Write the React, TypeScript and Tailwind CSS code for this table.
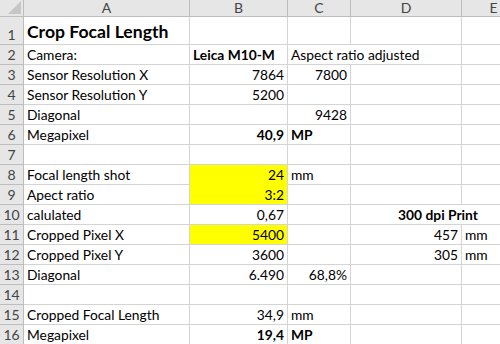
import React from 'react';

type Cell = {
  t?: string;
  align?: 'l' | 'r' | 'c';
  bold?: boolean;
  fill?: boolean;
  span?: number;
  noBottom?: boolean;
};

const COLS = ['A', 'B', 'C', 'D', 'E'];

// sheet contents, keyed by row number; each entry lists columns A..E
const rows: Record<number, (Cell | null)[]> = {
  1: [{ t: 'Crop Focal Length', bold: true }, {}, {}, {}, {}],
  2: [{ t: 'Camera:' }, { t: 'Leica M10-M', bold: true }, { t: 'Aspect ratio adjusted', span: 2 }, null, {}],
  3: [{ t: 'Sensor Resolution X' }, { t: '7864', align: 'r' }, { t: '7800', align: 'r' }, {}, {}],
  4: [{ t: 'Sensor Resolution Y' }, { t: '5200', align: 'r' }, {}, {}, {}],
  5: [{ t: 'Diagonal' }, {}, { t: '9428', align: 'r' }, {}, {}],
  6: [{ t: 'Megapixel' }, { t: '40,9', align: 'r', bold: true }, { t: 'MP', bold: true }, {}, {}],
  7: [{}, {}, {}, {}, {}],
  8: [{ t: 'Focal length shot' }, { t: '24', align: 'r', fill: true, noBottom: true }, { t: 'mm' }, {}, {}],
  9: [{ t: 'Apect ratio' }, { t: '3:2', align: 'r', fill: true }, {}, {}, {}],
  10: [{ t: 'calulated' }, { t: '0,67', align: 'r' }, {}, { t: '300 dpi Print', align: 'c', bold: true, span: 2 }, null],
  11: [{ t: 'Cropped Pixel X' }, { t: '5400', align: 'r', fill: true }, {}, { t: '457', align: 'r' }, { t: 'mm' }],
  12: [{ t: 'Cropped Pixel Y' }, { t: '3600', align: 'r' }, {}, { t: '305', align: 'r' }, { t: 'mm' }],
  13: [{ t: 'Diagonal' }, { t: '6.490', align: 'r' }, { t: '68,8%', align: 'r' }, {}, {}],
  14: [{}, {}, {}, {}, {}],
  15: [{ t: 'Cropped Focal Length' }, { t: '34,9', align: 'r' }, { t: 'mm' }, {}, {}],
  16: [{ t: 'Megapixel' }, { t: '19,4', align: 'r', bold: true }, { t: 'MP', bold: true }, {}, {}],
};

const font = "font-['Lato','Open_Sans',sans-serif]";

const SheetCell = ({ c, row }: { c: Cell; row: number }) => {
  const justify = c.align === 'r' ? 'justify-end' : c.align === 'c' ? 'justify-center' : 'justify-start';
  const title = row === 1;
  return (
    <div
      className={[
        'flex items-end whitespace-nowrap px-[3px] border-r border-b',
        c.span === 2 ? 'col-span-2' : '',
        c.fill ? 'bg-[#ffff00]' : 'bg-white',
        c.noBottom ? 'border-r-[#d4d4d4] border-b-[#ffff00]' : 'border-[#d4d4d4]',
        justify,
        title ? 'text-[17.6px] font-bold pb-[3px] leading-none' : 'text-[13.8px] leading-[19px]',
        c.bold && !title ? 'font-bold' : '',
      ].join(' ')}
    >
      {c.t}
    </div>
  );
};

export default function App() {
  return (
    <div className={`w-[500px] h-[344px] overflow-hidden bg-white text-black ${font}`}>
      <div className="grid w-[526px] grid-cols-[24px_166px_98px_63px_111px_64px] grid-rows-[17px_28px_repeat(15,20px)]">
        {/* corner select-all box */}
        <div className="relative bg-[#e6e6e6] border-r border-b border-[#bdbdbd]">
          <svg className="absolute right-[2px] bottom-[2px]" width="13" height="13" viewBox="0 0 13 13">
            <path d="M13 0 L13 13 L0 13 Z" fill="#c6c6c6" />
          </svg>
        </div>
        {COLS.map((l) => (
          <div
            key={l}
            className="flex items-center justify-center bg-[#e6e6e6] border-r border-b border-[#bdbdbd] text-[14px] leading-none text-[#444]"
          >
            {l}
          </div>
        ))}

        {Object.entries(rows).map(([n, cells]) => (
          <React.Fragment key={n}>
            <div className="flex items-end justify-center bg-[#e6e6e6] border-r border-b border-[#bdbdbd] text-[14px] leading-[19px] text-[#444]">
              {n}
            </div>
            {cells.map((c, i) => (c ? <SheetCell key={i} c={c} row={Number(n)} /> : null))}
          </React.Fragment>
        ))}
      </div>
    </div>
  );
}
